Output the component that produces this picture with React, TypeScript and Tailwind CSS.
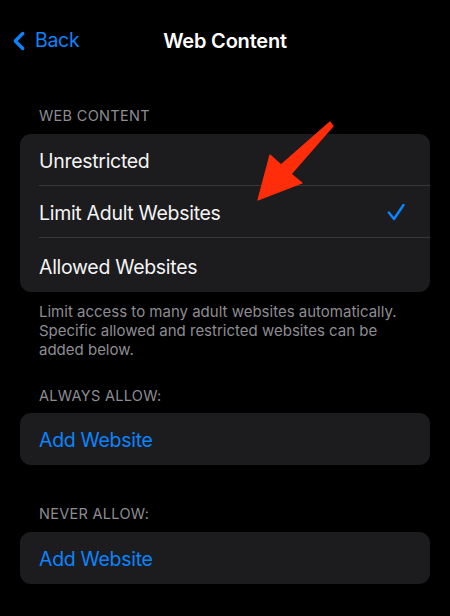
import { FiChevronLeft } from "react-icons/fi";

const FONT = { fontFamily: "Inter, 'Noto Sans', sans-serif" };

const Check = () => (
  <svg width="18" height="18" viewBox="0 0 18 18" fill="none">
    <path
      d="M1.8 9.5 L7 16 L16.5 2"
      stroke="#0a84ff"
      strokeWidth="2.4"
      strokeLinecap="round"
      strokeLinejoin="round"
    />
  </svg>
);

const Row = ({
  label,
  checked,
  divider,
  blue,
}: {
  label: string;
  checked?: boolean;
  divider?: boolean;
  blue?: boolean;
}) => (
  <div className="relative flex h-[52px] items-center justify-between pl-[19px] pr-[25px]">
    <span
      className={`pt-[3px] text-[19.5px] tracking-[-0.3px] ${blue ? "text-[#0a84ff]" : "text-[#f4f4f5]"}`}
    >
      {label}
    </span>
    {checked ? <Check /> : null}
    {divider ? (
      <div className="absolute bottom-0 left-[19px] right-0 h-px bg-[#38383a]" />
    ) : null}
  </div>
);

const Header = ({ children, className }: { children: string; className?: string }) => (
  <p className={`pl-[39px] text-[14.5px] uppercase leading-[18px] tracking-[0.3px] text-[#8d8d93] ${className ?? ""}`}>
    {children}
  </p>
);

export default function App() {
  return (
    <div
      className="relative h-[616px] w-[450px] overflow-hidden bg-black antialiased"
      style={FONT}
    >
      {/* Nav bar */}
      <div className="relative flex h-[82px] items-center">
        <div className="flex items-center pl-[4px] text-[#0a84ff]">
          <FiChevronLeft className="h-[30px] w-[30px]" strokeWidth={2.6} />
          <span className="ml-[1px] text-[19.5px] tracking-[-0.3px]">Back</span>
        </div>
        <h1 className="absolute left-0 right-0 text-center text-[20px] font-semibold tracking-[-0.2px] text-white">
          Web Content
        </h1>
      </div>

      <Header className="mt-[25px]">Web Content</Header>

      <div className="mx-[20px] mt-[9px] overflow-hidden rounded-[11px] bg-[#1c1c1e]">
        <Row label="Unrestricted" divider />
        <Row label="Limit Adult Websites" checked divider />
        <div className="h-[2px]" />
        <Row label="Allowed Websites" />
      </div>

      <p className="mt-[10px] pl-[39px] pr-[45px] text-[15px] leading-[19px] text-[#8d8d93]">
        Limit access to many adult websites automatically. Specific allowed and
        restricted websites can be added below.
      </p>

      <Header className="mt-[28px]">Always Allow:</Header>
      <div className="mx-[20px] mt-[8px] rounded-[11px] bg-[#1c1c1e]">
        <Row label="Add Website" blue />
      </div>

      <Header className="mt-[40px]">Never Allow:</Header>
      <div className="mx-[20px] mt-[9px] rounded-[11px] bg-[#1c1c1e]">
        <Row label="Add Website" blue />
      </div>

      {/* Annotation arrow */}
      <svg
        className="pointer-events-none absolute left-0 top-0"
        width="450"
        height="616"
        viewBox="0 0 450 616"
      >
        <path
          d="M330 122 L333 126 L291 174 L302 183 L258 200 L270 155 L281 165 Z"
          fill="#ff2d0a"
          stroke="#ff2d0a"
          strokeWidth="1.2"
          strokeLinejoin="round"
        />
      </svg>
    </div>
  );
}
